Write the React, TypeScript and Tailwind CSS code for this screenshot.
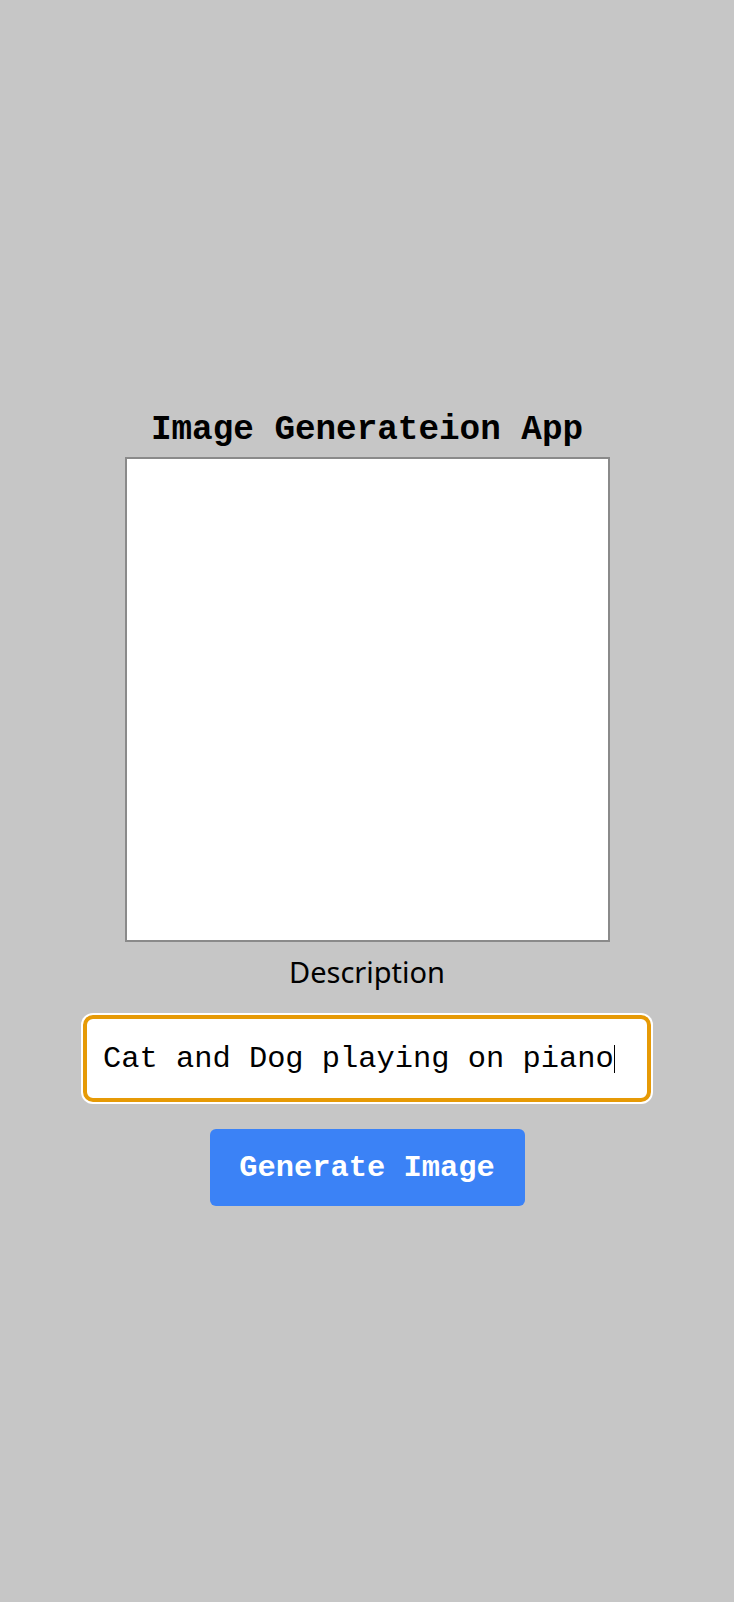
import React from 'react';

const mono = { fontFamily: '"Liberation Mono", "DejaVu Sans Mono", monospace' };

export default function App() {
  const prompt = 'Cat and Dog playing on piano';

  return (
    <div className="min-h-screen w-full bg-[#c6c6c6] flex flex-col items-center pt-[411px]">
      {/* Titulo */}
      <h1
        className="text-[34.3px] leading-[38px] font-bold text-black"
        style={mono}
      >
        Image Generateion App
      </h1>

      {/* Area da imagem */}
      <div className="mt-[8px] w-[485px] h-[485px] bg-white border-2 border-[#8a8a8a]" />

      <label
        className="mt-[10px] text-[29px] leading-[40px] text-black"
        style={{ fontFamily: '"Noto Sans", "Open Sans", sans-serif' }}
      >
        Description
      </label>

      {/* Campo de descricao */}
      <div className="mt-[23px] w-[568px] h-[87px] bg-white border-4 border-[#e69a06] rounded-[10px] shadow-[0_0_0_2px_#ffffff] flex items-center pl-[16px]">
        <span className="text-[30.4px] leading-[34px] text-black whitespace-pre" style={mono}>
          {prompt}
        </span>
        <span className="w-[1px] h-[28px] bg-black" />
      </div>

      <button
        className="mt-[27px] w-[315px] h-[77px] bg-[#3b82f6] rounded-[6px] text-white text-[30.4px] leading-[34px] font-bold"
        style={mono}
      >
        Generate Image
      </button>
    </div>
  );
}
